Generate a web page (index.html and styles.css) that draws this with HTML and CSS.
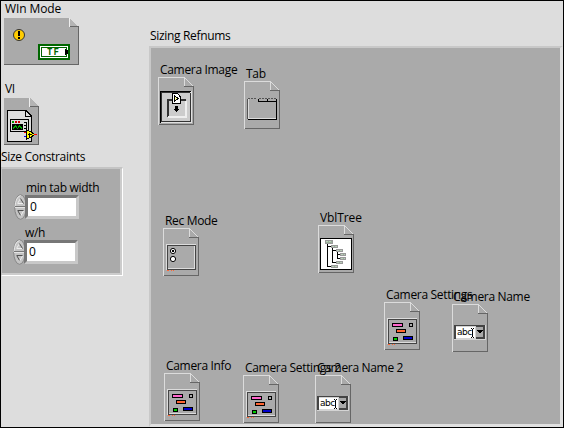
FILE: index.html
```html
<!DOCTYPE html>
<html lang="en">
<head>
<meta charset="utf-8">
<title>Front Panel</title>
<link rel="stylesheet" href="styles.css">
</head>
<body>
<svg class="defs" width="0" height="0">
  <symbol id="page" viewBox="0 0 36 48">
    <path d="M.5 48V.5H26.5" stroke="#dcdcdc" fill="none"/>
    <path d="M26.5 0V9.5H35" stroke="#666" fill="none"/>
    <path d="M26.5 1V9" stroke="#dcdcdc" fill="none"/>
    <path d="M26.5 .5L35.5 9.5" stroke="#dcdcdc" fill="none"/>
    <path d="M35.5 9V47.5H1" stroke="#666" fill="none"/>
  </symbol>
  <symbol id="cluster" viewBox="0 0 36 48">
    <use href="#page"/>
    <path d="M3.5 42V16.5H32.5V41.5H4" stroke="#dcdcdc" fill="none"/>
    <rect x="4.5" y="17.5" width="28" height="24" stroke="#444" fill="#aaa"/>
    <path d="M5 40.500H32" stroke="#dcdcdc"/>
    <g stroke="#000">
      <rect x="8.5" y="21.5" width="10" height="3" fill="#ff66cc"/>
      <rect x="25.500" y="21.5" width="3" height="3" fill="#aaa"/>
      <rect x="12.5" y="27.500" width="9" height="3" fill="#ff6633"/>
      <rect x="9.500" y="35.500" width="4" height="3" fill="#00cc00"/>
      <rect x="19.500" y="34.500" width="9" height="3" fill="#0000cc"/>
    </g>
    <path d="M4 42.500H6M8 42.500H9M10 42.500H11" stroke="#ff6633"/>
  </symbol>
  <symbol id="combo" viewBox="0 0 36 48">
    <use href="#page"/>
    <path d="M2 21H34V36H2z" fill="#d4d4d4"/>
    <path d="M2 21H33V22H4V35H2z" fill="#444"/>
    <path d="M4 23H23V34H4z" fill="#fff"/>
    <path d="M24 22H33V35H24z" fill="#444"/>
    <path d="M24 23H31V33H24z" fill="#aaa"/>
    <path d="M25 26H31V27H30V28H29V29H27V28H26V27H25z" fill="#000"/>
    <path d="M19 24.500h1M21 24.500h1M20.500 25V33M19 33.500h1M21 33.500h1" stroke="#000"/>
  </symbol>
  <symbol id="spin" viewBox="0 0 13 26">
    <ellipse cx="6.500" cy="13" rx="5.800" ry="12.300" fill="#c4c4c4" stroke="#858585"/>
    <path d="M1 13Q1.500 3 6.500 1.500" stroke="#ececec" fill="none"/>
    <path d="M1 12.500H12" stroke="#777"/>
    <path d="M1 13.500H12" stroke="#e4e4e4"/>
    <path d="M3.500 9.500L6.500 4.500M4 9.500H9" stroke="#eee" fill="none"/>
    <path d="M6.500 4.500L9.500 9.500M3.500 16.500H9.500M4 17L6.500 21.500" stroke="#505050" fill="none"/>
    <path d="M9.500 17L7 21.500" stroke="#eee"/>
  </symbol>
</svg>

<main class="panel">
  <section class="item win-mode">
    <span class="label">WIn Mode</span>
    <svg width="75" height="47" viewBox="0 0 75 47" shape-rendering="crispEdges">
      <path d="M0 0H65V9H75V47H0z" fill="#aaa"/>
      <path d="M65 0L75 9H65z" fill="#b4b4b4"/>
      <path d="M65.500 0V8.500H74" stroke="#eee" fill="none"/>
      <path d="M66 8.500H75M74.500 9V46.500H0" stroke="#666" fill="none"/>
      <circle cx="15" cy="17" r="5.500" fill="#ffcc00" stroke="#333" shape-rendering="auto"/>
      <path d="M14 13H16V18H14zM14 19H16V21H14z"/>
      <path d="M34 26H66V42H34z" fill="#006600"/>
      <path d="M36 28H64V40H36z" fill="#fff"/>
      <path d="M37 29H63V39H37z" fill="#006600"/>
      <path d="M38 30H62V38H38z" fill="#fff"/>
      <path d="M61 31H62V32H64V36H62V37H61z"/>
    </svg>
    <b class="bool">TF</b>
  </section>

  <section class="item vi">
    <span class="label">VI</span>
    <svg width="35" height="47" viewBox="0 0 35 47" shape-rendering="crispEdges">
      <path d="M0 0H26V8H35V47H0z" fill="#aaa"/>
      <path d="M26 0L35 9H26z" fill="#b4b4b4"/>
      <path d="M25.500 0V8.500H34" stroke="#eee" fill="none"/>
      <path d="M26 8.500H35M34.500 9V46.500H0" stroke="#666" fill="none"/>
      <path d="M3.500 12.500H22L27.500 18V43.500H3.500z" fill="#ddd" stroke="#000"/>
      <path d="M21.500 12.500V18.500H27" stroke="#000" fill="none"/>
      <rect x="6.500" y="21.500" width="18" height="12" fill="#ddd" stroke="#000"/>
      <path d="M8 23h2v2H8z" fill="#090"/><path d="M11 23h2v2h-2zM14 23h2v2h-2z" fill="#c00"/>
      <path d="M8 26H19V32H8z"/>
      <path d="M9 30.500L11.500 28L13.500 30.500L15.500 28L18 30.500" stroke="#0a0" fill="none"/>
      <path d="M20 24.500h3M20 27.500h3M20 30.500h3M22.500 25v5" stroke="#000" fill="none"/>
      <path d="M20 34.500h3" stroke="#f00"/><path d="M20 38.500h3" stroke="#00f"/>
      <path d="M22.500 31.500V41.500L31 36.500z" fill="#ffff00" stroke="#000"/>
      <path d="M24 36.500h4M25.500 35v4" stroke="#000"/>
      <path d="M30 36.500h3" stroke="#f00"/>
    </svg>
  </section>

  <section class="item constraints">
    <span class="label">Size Constraints</span>
    <div class="cluster">
      <div class="number">
        <span class="label">min tab width</span>
        <div class="entry"><svg width="13" height="26"><use href="#spin"/></svg><span class="value">0</span></div>
      </div>
      <div class="number ratio">
        <span class="label">w/h</span>
        <div class="entry"><svg width="13" height="26"><use href="#spin"/></svg><span class="value">0</span></div>
      </div>
    </div>
  </section>

  <span class="label refnums-title">Sizing Refnums</span>
  <section class="refnums"></section>

  <section class="item camera-image">
    <span class="label">Camera Image</span>
    <svg width="36" height="48" viewBox="0 0 36 48" shape-rendering="crispEdges">
      <use href="#page"/>
      <path d="M3 14H34V46H3z" fill="#e0e0e0"/>
      <path d="M2.500 46V14.500H33" stroke="#000" fill="none"/>
      <path d="M4 16H32V44H4z" fill="#ccc"/>
      <path d="M3.500 45V15.500H32M32.500 16V44.500H4" stroke="#333" fill="none"/>
      <path d="M10 23H27V40H10z" fill="#ccc"/>
      <path d="M9.500 40V22.500H28" stroke="#333" stroke-width="2" fill="none"/>
      <path d="M10 40H27.500V24" stroke="#eee" stroke-width="2" fill="none"/>
      <path d="M14.500 16.500H19.500L22.500 20V26.500H14.500z" fill="#fff" stroke="#000"/>
      <path d="M16.500 18.500V24.500L20 21.500z" fill="#ffff99" stroke="#000"/>
      <path d="M17 29H20V32H21V33H20V34H19V35H18V34H17V33H16V32H17z"/>
    </svg>
  </section>

  <section class="item tab">
    <span class="label">Tab</span>
    <svg width="36" height="48" viewBox="0 0 36 48" shape-rendering="crispEdges">
      <use href="#page"/>
      <path d="M4 17.500H13" stroke="#555" stroke-dasharray="2 1"/>
      <path d="M4.500 18V37.500H32" stroke="#dcdcdc" fill="none"/>
      <path d="M3.500 18V38" stroke="#555"/>
      <path d="M4 38.500H32.500V18" stroke="#000" fill="none"/>
      <path d="M14.500 18V20.500H32M23.500 18V20" stroke="#000" fill="none"/>
      <path d="M15 17.500H32" stroke="#555" stroke-dasharray="2 1"/>
    </svg>
  </section>

  <section class="item rec-mode">
    <span class="label">Rec Mode</span>
    <svg width="36" height="48" viewBox="0 0 36 48" shape-rendering="crispEdges">
      <use href="#page"/>
      <path d="M3.500 42V16.500H33" stroke="#dcdcdc" fill="none"/>
      <rect x="4.500" y="17.500" width="28" height="24" fill="#aaa" stroke="#444"/>
      <path d="M5 40.500H31.500V18" stroke="#dcdcdc" fill="none"/>
      <g fill="#fff" stroke="#000" shape-rendering="auto"><circle cx="10" cy="23" r="2.600"/><circle cx="10" cy="31" r="2.600"/></g>
      <path d="M9 22h2v2H9z"/>
      <path d="M4 42.500H6M8 42.500H9M10 42.500H11" stroke="#ff6633"/>
    </svg>
  </section>

  <section class="item vbl-tree">
    <span class="label">VblTree</span>
    <svg width="36" height="48" viewBox="0 0 36 48" shape-rendering="crispEdges">
      <use href="#page"/>
      <rect x="2.500" y="13.500" width="31" height="31" fill="#fff" stroke="#000"/>
      <path d="M9.500 18V41.500H13M9 21.500H13M14.500 23V37.500H18M14 25.500H18M19.500 26V33.500H22M19 29.500H22" stroke="#000" fill="none"/>
      <g fill="#9ab09a" stroke="#999"><path d="M7.500 15.500h7v3h-7zM13.500 20.500h6v2h-6zM18.500 24.500h6v2h-6zM22.500 28.500h5v2h-5zM22.500 32.500h5v2h-5zM18.500 36.500h6v2h-6zM13.500 40.500h6v2h-6z"/></g>
      <path d="M8 16.500h6M14 21.500h5M19 25.500h5M23 29.500h4M23 33.500h4M19 37.500h5M14 41.500h5" stroke="#b9ceb9" stroke-dasharray="2 1"/>
    </svg>
  </section>

  <section class="item settings">
    <span class="label">Camera Settings</span>
    <svg width="36" height="48" shape-rendering="crispEdges"><use href="#cluster"/></svg>
  </section>
  <section class="item name">
    <span class="label">Camera Name</span>
    <svg width="36" height="48" shape-rendering="crispEdges"><use href="#combo"/></svg>
    <span class="abc">abc</span>
  </section>
  <section class="item info">
    <span class="label">Camera Info</span>
    <svg width="36" height="48" shape-rendering="crispEdges"><use href="#cluster"/></svg>
  </section>
  <section class="item settings-2">
    <span class="label">Camera Settings 2</span>
    <svg width="36" height="48" shape-rendering="crispEdges"><use href="#cluster"/></svg>
  </section>
  <section class="item name-2">
    <span class="label">Camera Name 2</span>
    <svg width="36" height="48" shape-rendering="crispEdges"><use href="#combo"/></svg>
    <span class="abc">abc</span>
  </section>
</main>
</body>
</html>
```

FILE: styles.css
```css
* { box-sizing: border-box; }
body { margin: 0; font: 12px/16px "Open Sans", "Noto Sans", sans-serif; color: #000; }
svg { display: block; }
.defs { position: absolute; }
.panel {
  position: relative;
  width: 564px;
  height: 428px;
  overflow: hidden;
  background: #ddd;
  border: 1px solid #000;
}

/* Controls sit freely on the panel; each origin is its icon's top-left corner. */
.item { position: absolute; }
.item > .label { position: absolute; left: 2px; bottom: calc(100% - 1px); }
.label { white-space: nowrap; letter-spacing: -0.32px; }

.win-mode { left: 3px; top: 17px; }
.item.win-mode > .label { left: 1px; bottom: calc(100% + 1px); letter-spacing: -0.1px; }
.vi { left: 3px; top: 97px; }
.item.vi > .label { left: 1px; bottom: calc(100% + 1px); }
.camera-image { left: 157px; top: 76px; }
.tab { left: 243px; top: 80px; }
.rec-mode { left: 162px; top: 227px; }
.vbl-tree { left: 317px; top: 224px; }
.item.vbl-tree > .label { letter-spacing: -0.1px; }
.settings { left: 383px; top: 301px; }
.name { left: 451px; top: 303px; }
.info { left: 163px; top: 372px; }
.settings-2 { left: 242px; top: 374px; }
.name-2 { left: 314px; top: 374px; }
.item.name > .label { left: 1px; }

.bool {
  position: absolute;
  left: 43px;
  top: 27px;
  font: bold 9px/14px "DejaVu Sans Mono", monospace;
  letter-spacing: 1px;
  color: #006600;
}
.abc {
  position: absolute;
  left: 5px;
  top: 22px;
  font: 9px/12px "DejaVu Sans", sans-serif;
  letter-spacing: -0.5px;
}

.refnums-title { position: absolute; left: 149px; top: 27px; }
.refnums {
  position: absolute;
  left: 148px;
  top: 45px;
  width: 414px;
  height: 381px;
  background: #aaa;
  border: 2px solid #c8c8c8;
  border-right: 3px solid #e0e0e0;
  border-bottom: 3px solid #e0e0e0;
}

.constraints { left: 0; top: 166px; }
.item.constraints > .label { left: 0; bottom: calc(100% + 2px); }
.cluster {
  width: 122px;
  height: 109px;
  padding: 12px 0 0 12px;
  background: #aaa;
  border: solid #c4c4c4;
  border-width: 2px 1px 1px 1px;
  border-right-color: #fff;
  border-bottom-color: #fff;
  box-shadow: inset -2px -2px #ccc;
}
.number { height: 45px; }
.number .label { display: block; padding-left: 12px; height: 13px; line-height: 14px; }
.ratio { margin-left: -1px; }
.entry { display: flex; align-items: center; }
.value {
  width: 54px;
  height: 24px;
  margin-left: -2px;
  padding: 1px 0 0 2px;
  line-height: 16px;
  background: #fff;
  border: solid #777;
  border-width: 3px;
  border-right-color: #c8c8c8;
  border-bottom-color: #c8c8c8;
}
```
